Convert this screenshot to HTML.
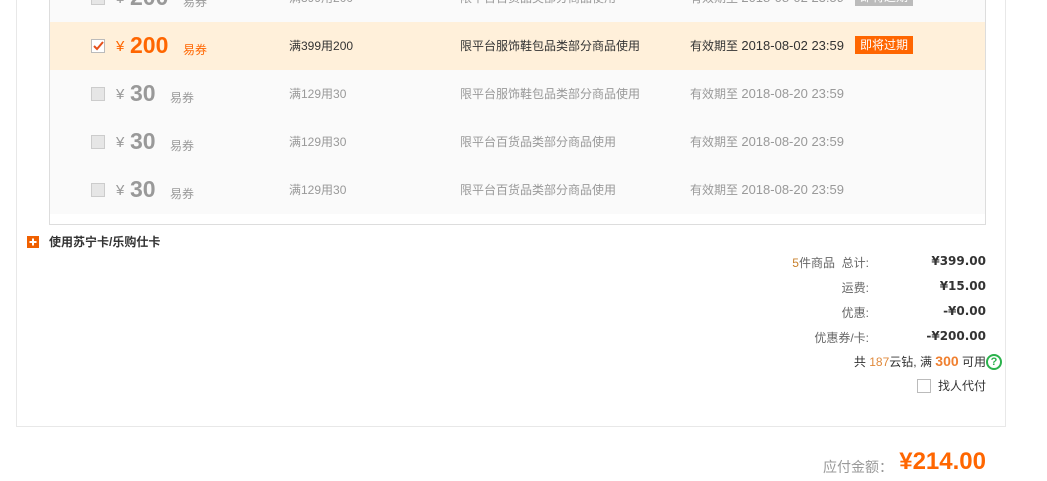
<!DOCTYPE html>
<html><head><meta charset="utf-8"><style>
*{margin:0;padding:0;box-sizing:border-box}
body{width:1047px;height:481px;background:#fff;position:relative;overflow:hidden;font-family:"Liberation Sans","Noto Sans CJK SC",sans-serif;font-size:12px;color:#333}
.a{position:absolute;white-space:nowrap}
.outer{position:absolute;left:16px;top:-10px;width:990px;height:437px;border:1px solid #e8e8e8;border-top:none}
.list{position:absolute;left:49px;top:-10px;width:937px;height:235px;border:1px solid #ddd;border-top:none;background:#fff}
.row{position:absolute;left:50px;width:935px;height:48px;background:#fafafa}
.cb{position:absolute;left:41px;top:17px;width:14px;height:14px;border:1px solid #ccc;background:#e6e6e6}
.yen{position:absolute;left:66px;top:16px;font-size:15px;color:#999}
.amt{position:absolute;left:80px;top:10px;font-size:23px;font-weight:bold;color:#999}
.yi{position:absolute;top:19px;font-size:12px;color:#999}
.c1{position:absolute;left:239px;top:15px;font-size:12px;color:#999}
.c2{position:absolute;left:410px;top:15px;color:#999}
.c3{position:absolute;left:640px;top:15px;color:#999}
.c3 b{font-weight:normal;font-size:13px}
.tag{position:absolute;left:805px;top:14px;height:18px;padding:0 5px;line-height:18px;color:#fff;background:#ff6600;font-size:12px}
.on .yen,.on .amt,.on .yi{color:#f60}
.on .c1,.on .c2,.on .c3{color:#333}
.lbl{position:absolute;right:178px;color:#666;text-align:right;font-size:12px}
.val{position:absolute;right:61px;font-weight:bold;color:#333;text-align:right;font-family:"DejaVu Sans",sans-serif;font-size:12px}
</style></head><body>
<div class="outer"></div>
<div class="list"></div>
<div class="row" style="top:-26px"><div class="cb"></div><span class="yen">¥</span><span class="amt">200</span><span class="yi" style="left:133px">易券</span><span class="c1">满399用200</span><span class="c2">限平台百货品类部分商品使用</span><span class="c3">有效期至 <b>2018-08-02 23:59</b></span><span class="tag" style="background:#bbb">即将过期</span></div>
<div class="row on" style="top:22px;background:#fff0da"><div class="cb" style="background:#fff;border-color:#bbb"><svg width="12" height="12" viewBox="0 0 12 12" style="position:absolute;left:0;top:0"><path d="M2 6 L5 9 L11 2" stroke="#e6501a" stroke-width="2" fill="none"/></svg></div><span class="yen">¥</span><span class="amt">200</span><span class="yi" style="left:133px">易券</span><span class="c1">满399用200</span><span class="c2">限平台服饰鞋包品类部分商品使用</span><span class="c3">有效期至 <b>2018-08-02 23:59</b></span><span class="tag">即将过期</span></div>
<div class="row" style="top:70px"><div class="cb"></div><span class="yen">¥</span><span class="amt">30</span><span class="yi" style="left:120px">易券</span><span class="c1">满129用30</span><span class="c2">限平台服饰鞋包品类部分商品使用</span><span class="c3">有效期至 <b>2018-08-20 23:59</b></span></div>
<div class="row" style="top:118px"><div class="cb"></div><span class="yen">¥</span><span class="amt">30</span><span class="yi" style="left:120px">易券</span><span class="c1">满129用30</span><span class="c2">限平台百货品类部分商品使用</span><span class="c3">有效期至 <b>2018-08-20 23:59</b></span></div>
<div class="row" style="top:166px"><div class="cb"></div><span class="yen">¥</span><span class="amt">30</span><span class="yi" style="left:120px">易券</span><span class="c1">满129用30</span><span class="c2">限平台百货品类部分商品使用</span><span class="c3">有效期至 <b>2018-08-20 23:59</b></span></div>

<div class="a" style="left:27px;top:236px;width:12px;height:12px;background:#f06000"><svg width="12" height="12" viewBox="0 0 12 12"><path d="M6 2.5V9.5M2.5 6H9.5" stroke="#fff" stroke-width="2"/></svg></div>
<div class="a" style="left:49px;top:233px;font-weight:bold;color:#333">使用苏宁卡/乐购仕卡</div>

<div class="lbl" style="top:254px"><span style="color:#c8812c">5</span>件商品&nbsp; 总计:</div><div class="val" style="top:254px">¥399.00</div>
<div class="lbl" style="top:279px">运费:</div><div class="val" style="top:279px">¥15.00</div>
<div class="lbl" style="top:304px">优惠:</div><div class="val" style="top:304px">-¥0.00</div>
<div class="lbl" style="top:329px">优惠券/卡:</div><div class="val" style="top:329px">-¥200.00</div>
<div class="a" style="right:61px;top:353px;color:#333">共 <span style="color:#e08a3c">187</span>云钻, 满 <span style="color:#f08030;font-weight:bold;font-size:14px">300</span> 可用</div>
<div class="a" style="left:986px;top:354px;width:16px;height:16px;border:2px solid #2bb24c;border-radius:50%;color:#2bb24c;font-size:11px;font-weight:bold;line-height:12px;text-align:center">?</div>
<div class="a" style="left:917px;top:379px;width:14px;height:14px;border:1px solid #bbb"></div>
<div class="a" style="left:938px;top:377px;color:#333">找人代付</div>

<div class="a" style="left:823px;top:457px;font-size:14px;color:#999">应付金额：</div>
<div class="a" style="right:61px;top:448px;font-size:24px;font-weight:bold;color:#f60">¥214.00</div>
</body></html>
